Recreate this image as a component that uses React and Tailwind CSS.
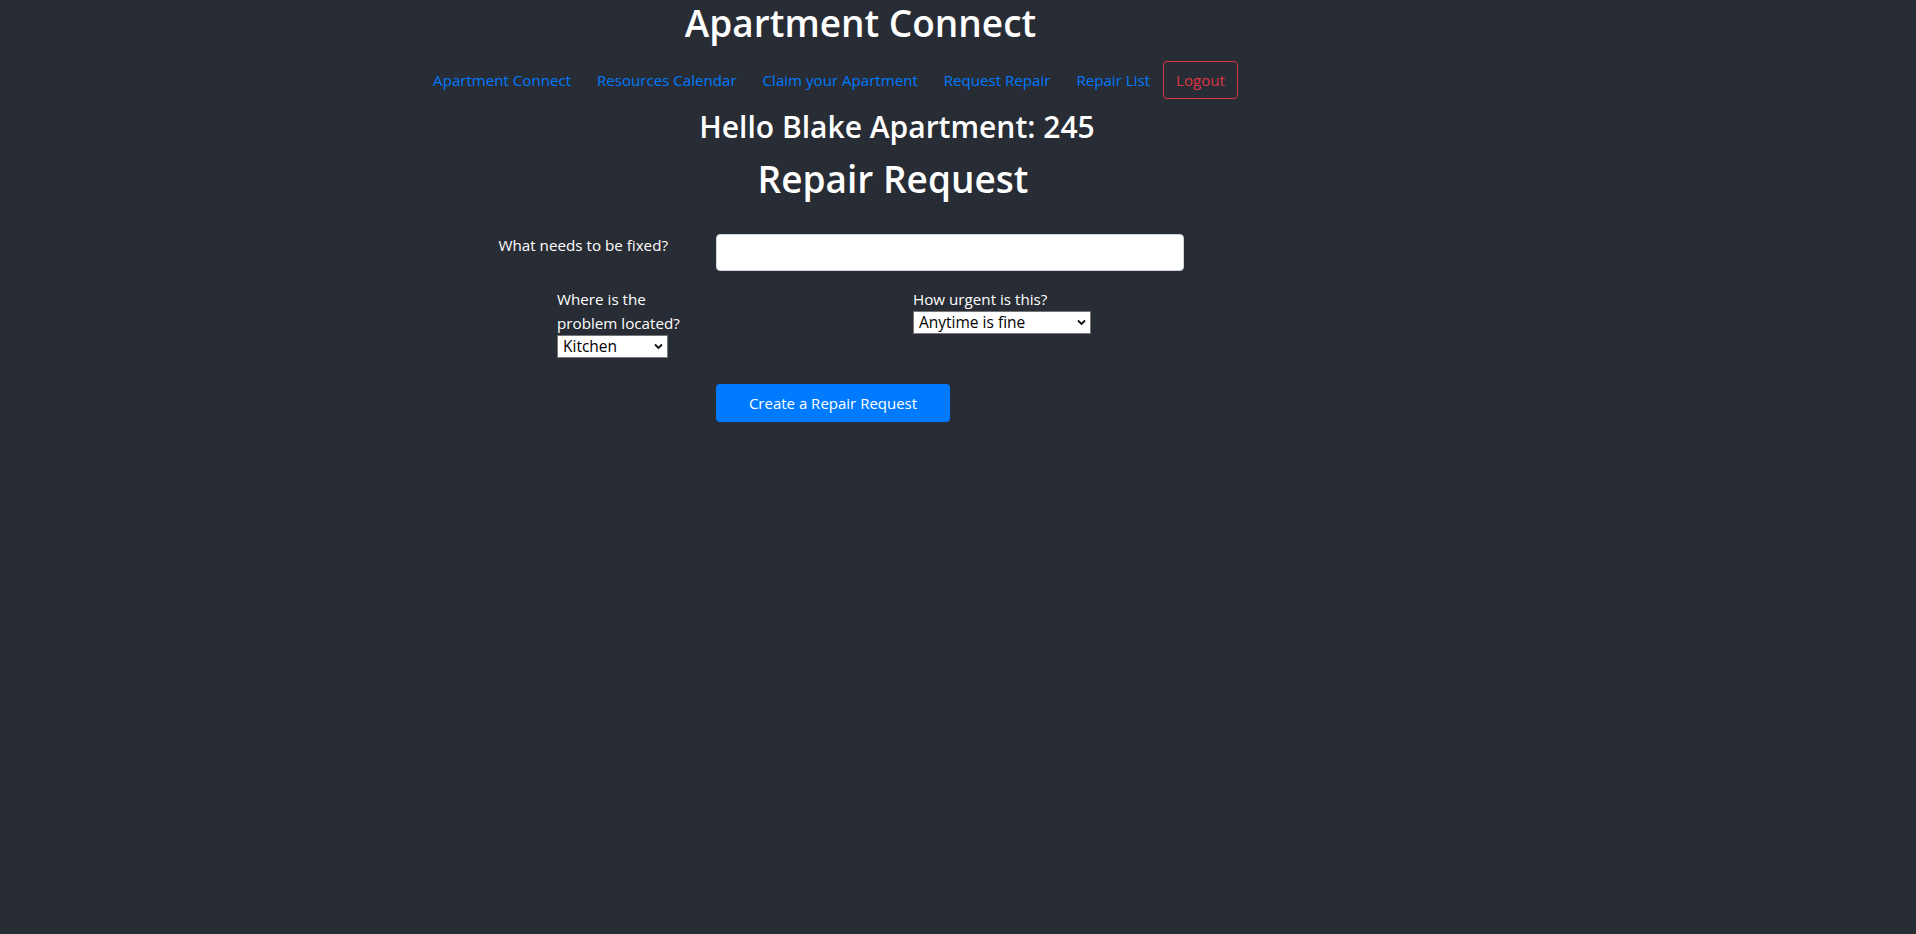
import React, { useState } from 'react';

const navLinks = ['Apartment Connect', 'Resources Calendar', 'Claim your Apartment', 'Request Repair', 'Repair List'];

const Chevron = () => (
  <svg className="pointer-events-none absolute right-[5px] top-[8px]" width="9" height="7" viewBox="0 0 9 7">
    <path d="M1 1.5 L4.5 5 L8 1.5" fill="none" stroke="#111" strokeWidth="1.8" />
  </svg>
);

const Select = ({ value, onChange, options, width }) => (
  <div className={`relative ${width}`}>
    <select
      value={value}
      onChange={(e) => onChange(e.target.value)}
      className="block h-[23px] w-full appearance-none rounded-none border border-[#767676] bg-white pl-[5px] pr-5 text-[15.5px] leading-[21px] text-black outline-none"
    >
      {options.map(o => (
        <option key={o} value={o}>{o}</option>
      ))}
    </select>
    <Chevron />
  </div>
);

const App = () => {
  const [issue, setIssue] = useState('');
  const [location, setLocation] = useState('Kitchen');
  const [urgency, setUrgency] = useState('Anytime is fine');

  return (
    <div className="min-h-screen bg-[#282c34] text-white" style={{ fontFamily: '"Segoe UI", "Open Sans", "Noto Sans", sans-serif' }}>
      <h1 className="w-[1721px] text-center text-[37px] font-semibold leading-[46px]">Apartment Connect</h1>

      <nav className="mt-[15px] flex w-[1658px] items-center justify-center text-[15.1px]">
        {navLinks.map(link => (
          <a key={link} href="#" className="px-[13px] leading-[24px] text-[#007bff] hover:underline">{link}</a>
        ))}
        <button className="h-[38px] rounded-[4px] border border-[#dc3545] px-3 text-[15.1px] text-[#dc3545]">Logout</button>
      </nav>

      <h2 className="mt-[9px] w-[1794px] text-center text-[30px] font-semibold leading-[38px]">Hello Blake Apartment: 245</h2>
      <h1 className="mt-[11px] w-[1786px] text-center text-[37px] font-semibold leading-[44px]">Repair Request</h1>

      <form className="mt-[33px] text-[15.2px]" onSubmit={(e) => e.preventDefault()}>
        <div className="flex items-start">
          <label className="ml-[470px] w-[198px] text-right leading-[22px]">What needs to be fixed?</label>
          <input
            type="text"
            value={issue}
            onChange={(e) => setIssue(e.target.value)}
            className="ml-[48px] h-[37px] w-[468px] rounded-[4px] border border-[#ced4da] bg-white px-3 text-black outline-none"
          />
        </div>

        <div className="mt-[16px] flex items-start">
          <div className="ml-[557px] w-[356px]">
            <label className="block w-[140px] leading-[24px]">Where is the problem located?</label>
            <Select value={location} onChange={setLocation} width="w-[111px]" options={['Kitchen', 'Bathroom', 'Bedroom', 'Living Room', 'Other']} />
          </div>
          <div>
            <label className="block leading-[24px]">How urgent is this?</label>
            <Select value={urgency} onChange={setUrgency} width="w-[178px]" options={['Anytime is fine', 'Soon', 'Urgent']} />
          </div>
        </div>

        <button type="submit" className="ml-[716px] mt-[26px] h-[38px] w-[234px] rounded-[4px] bg-[#007bff] text-[15px] text-white">
          Create a Repair Request
        </button>
      </form>
    </div>
  );
};

export default App;
